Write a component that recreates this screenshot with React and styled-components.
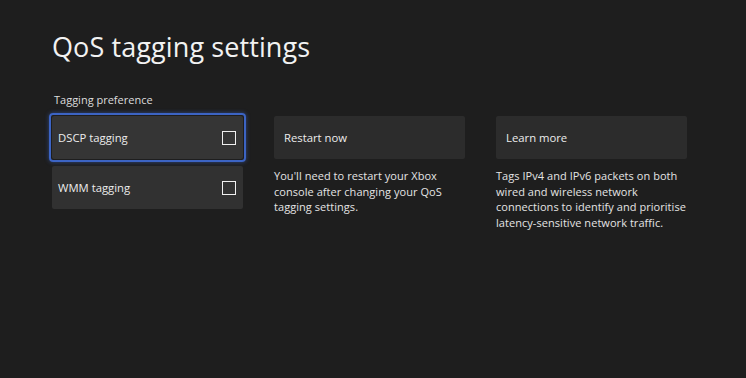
import styled, { createGlobalStyle } from 'styled-components';

const GlobalStyle = createGlobalStyle`
  html, body {
    margin: 0;
    background: #1e1e1e;
  }
  body {
    font-family: "Open Sans", "Noto Sans", sans-serif;
    color: #ececec;
  }
`;

const Page = styled.div`
  width: 746px;
  height: 378px;
  padding: 29px 0 0 52px;
  box-sizing: border-box;
  background: #1e1e1e;
`;

const Title = styled.h1`
  margin: 0 0 28px 0;
  font-size: 27px;
  font-weight: 400;
  line-height: 36px;
  color: #f2f2f2;
  letter-spacing: 0.1px;
`;

const Grid = styled.div`
  display: grid;
  grid-template-columns: repeat(3, 191px);
  column-gap: 31px;
  row-gap: 7px;
  align-items: start;
`;

const Label = styled.div`
  grid-column: 1 / 4;
  font-size: 11px;
  line-height: 14px;
  margin: 0 0 2px 2px;
  color: #dcdcdc;
`;

const Card = styled.div`
  position: relative;
  height: 43px;
  display: flex;
  align-items: center;
  justify-content: space-between;
  padding: 0 7px 0 ${(p) => (p.$inset ? 10 : 6)}px;
  box-sizing: border-box;
  background: ${(p) => (p.$focused ? '#353535' : p.$dim ? '#2c2c2c' : '#313131')};
  font-size: 11.3px;
  color: #ececec;
  border-radius: 2px;
  ${(p) =>
    p.$focused &&
    `
    &::after {
      content: '';
      position: absolute;
      inset: -3px;
      border: 2px solid #3c64c4;
      border-radius: 4px;
      box-shadow: 0 0 4px rgba(60, 100, 196, 0.6);
      pointer-events: none;
    }
  `}
`;

const Check = styled.span`
  width: 14px;
  height: 14px;
  box-sizing: border-box;
  border: 1.5px solid #f0f0f0;
`;

const Desc = styled.p`
  margin: 2px 0 0 0;
  font-size: 11px;
  line-height: 15.5px;
  color: #e4e4e4;
  letter-spacing: 0.05px;
`;

const App = () => {
  return (
    <Page>
      <GlobalStyle />
      <Title>QoS tagging settings</Title>
      <Grid>
        <Label>Tagging preference</Label>
        <Card $focused>
          DSCP tagging
          <Check />
        </Card>
        <Card $dim $inset>Restart now</Card>
        <Card $dim $inset>Learn more</Card>
        <Card>
          WMM tagging
          <Check />
        </Card>
        <Desc>
          You'll need to restart your Xbox console after changing your QoS tagging settings.
        </Desc>
        <Desc>
          Tags IPv4 and IPv6 packets on both wired and wireless network connections to identify
          and prioritise latency-sensitive network traffic.
        </Desc>
      </Grid>
    </Page>
  );
};

export default App;
